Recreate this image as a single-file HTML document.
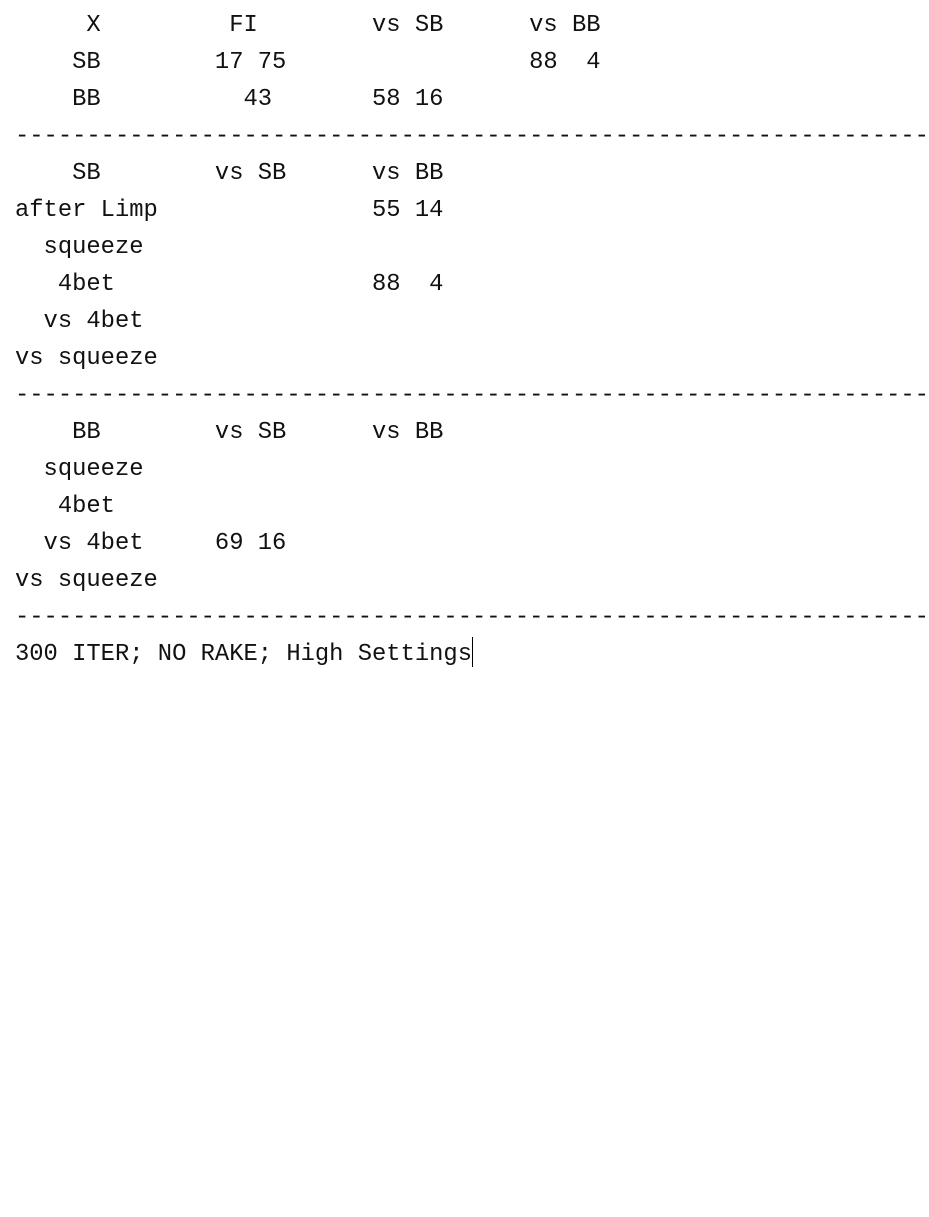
<!DOCTYPE html>
<html><head><meta charset="utf-8"><style>
html,body{margin:0;padding:0;background:#fff;width:929px;height:1217px;overflow:hidden}
pre{position:absolute;left:15px;top:7px;margin:0;font-family:"Liberation Mono",monospace;font-size:23.8px;line-height:37px;color:#111}
.caret{display:inline-block;width:1px;height:30px;background:#000;vertical-align:-7px}
</style></head><body><pre>     X         FI        vs SB      vs BB
    SB        17 75                 88  4
    BB          43       58 16
----------------------------------------------------------------
    SB        vs SB      vs BB
after Limp               55 14
  squeeze
   4bet                  88  4
  vs 4bet
vs squeeze
----------------------------------------------------------------
    BB        vs SB      vs BB
  squeeze
   4bet
  vs 4bet     69 16
vs squeeze
----------------------------------------------------------------
300 ITER; NO RAKE; High Settings<span class="caret"></span></pre></body></html>
